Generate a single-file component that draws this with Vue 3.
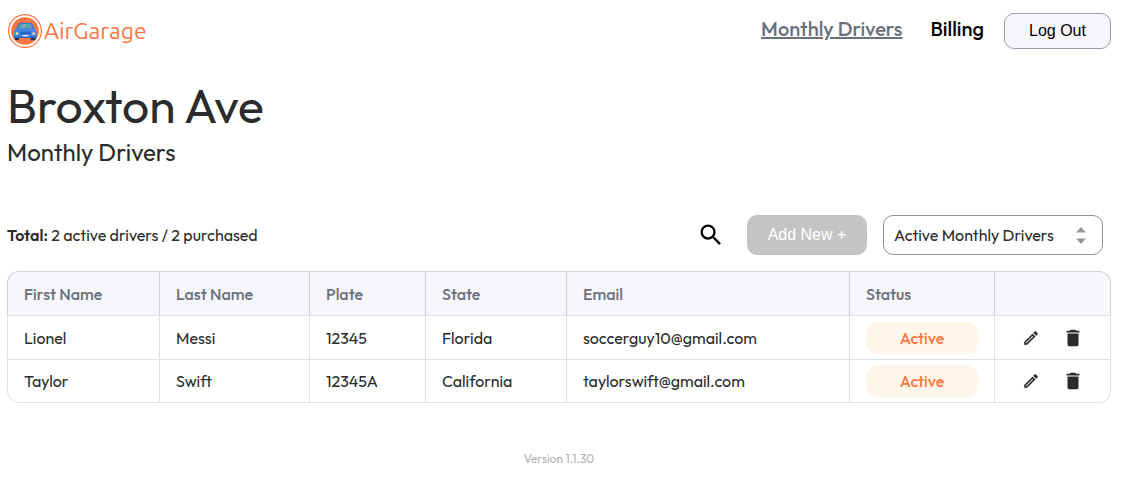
<script setup>
import { ref } from 'vue'

const filter = ref('active')
const columns = [
  { label: 'First Name', width: 153 },
  { label: 'Last Name', width: 150 },
  { label: 'Plate', width: 116 },
  { label: 'State', width: 141 },
  { label: 'Email', width: 283 },
  { label: 'Status', width: 145 },
  { label: '', width: 116 },
]
const total = columns.reduce((sum, c) => sum + c.width, 0)
const drivers = [
  { first: 'Lionel', last: 'Messi', plate: '12345', state: 'Florida', email: 'soccerguy10@gmail.com' },
  { first: 'Taylor', last: 'Swift', plate: '12345A', state: 'California', email: 'taylorswift@gmail.com' },
]
</script>

<template>
  <div class="page">
    <header class="topbar">
      <a class="brand" href="#">
        <svg class="logo" viewBox="0 0 36 36" aria-hidden="true">
          <circle cx="18" cy="18" r="17" fill="#ff7643" />
          <circle cx="18" cy="18" r="14.8" fill="none" stroke="#fff" stroke-width="1.9" />
          <path d="M8 24h4v3.200H9.200Q8 27.200 8 26zM23.500 24h5v2q0 1.200-1.200 1.200h-3.800z" fill="#24364a" />
          <path d="M13.200 9.700h10.600q1.200 0 1.700 1.200l2.300 5.200H9.200l2.300-5.200q.5-1.200 1.700-1.200z" fill="#3578cf" />
          <path d="M13.700 11h9.600q.7 0 1 .8l1.500 4H11.200l1.500-4q.3-.8 1-.8z" fill="#5f9fae" />
          <path d="M17 11h3l-3.500 4.800H13z" fill="#77b3bd" />
          <path d="M9.800 15.500h17q2.800 1.200 2.800 4V25H7v-5.500q0-2.800 2.800-4z" fill="#4287ea" />
          <path d="M12.500 18.500h12l-1.500 3H14zM7 23.300h22.600V25H7z" fill="#2867c3" />
          <circle cx="10" cy="20.500" r="1.300" fill="#ffe1a5" />
          <circle cx="26.600" cy="20.500" r="1.300" fill="#ffe1a5" />
          <path d="M15.500 22h6v1.500h-6z" fill="#e8edf5" />
        </svg>
        <span class="brand-name">AirGarage</span>
      </a>
      <nav class="nav">
        <a class="nav-link current" href="#">Monthly Drivers</a>
        <a class="nav-link" href="#">Billing</a>
        <button class="logout" type="button">Log Out</button>
      </nav>
    </header>

    <main>
      <h1>Broxton Ave</h1>
      <h2>Monthly Drivers</h2>

      <div class="toolbar">
        <p class="total"><strong>Total:</strong> 2 active drivers / 2 purchased</p>
        <div class="actions">
          <button class="icon-button search" type="button" aria-label="Search">
            <svg width="28" height="28" viewBox="0 0 24 24"><path d="M15.500 14h-.79l-.28-.27A6.471 6.471 0 0 0 16 9.500 6.500 6.500 0 1 0 9.500 16c1.610 0 3.090-.59 4.230-1.570l.27.28v.79l5 4.990L20.490 19l-4.990-5zm-6 0C7.010 14 5 11.990 5 9.500S7.010 5 9.500 5 14 7.010 14 9.500 11.990 14 9.500 14z" /></svg>
          </button>
          <button class="add" type="button" disabled>Add New +</button>
          <div class="select-wrap">
            <select v-model="filter" aria-label="Driver filter">
              <option value="active">Active Monthly Drivers</option>
            </select>
            <svg class="arrows" width="10" height="17" viewBox="0 0 10 17" aria-hidden="true"><path d="M0 5.500 5 0l5 5.500zM0 11.500h10L5 17z" fill="#969696" /></svg>
          </div>
        </div>
      </div>

      <table>
        <colgroup>
          <col v-for="(c, i) in columns" :key="i" :style="{ width: (c.width / total) * 100 + '%' }">
        </colgroup>
        <thead>
          <tr><th v-for="(c, i) in columns" :key="i" scope="col">{{ c.label }}</th></tr>
        </thead>
        <tbody>
          <tr v-for="d in drivers" :key="d.email">
            <td>{{ d.first }}</td>
            <td>{{ d.last }}</td>
            <td>{{ d.plate }}</td>
            <td>{{ d.state }}</td>
            <td>{{ d.email }}</td>
            <td><span class="badge">Active</span></td>
            <td>
              <div class="row-actions">
                <button class="icon-button" type="button" :aria-label="`Edit ${d.first}`">
                  <svg width="18" height="18" viewBox="0 0 24 24"><path d="M14.060 9.020l.92.92L5.920 19H5v-.92l9.060-9.060M17.660 3c-.25 0-.51.1-.7.290l-1.830 1.830 3.750 3.750 1.830-1.830a.996.996 0 0 0 0-1.410l-2.340-2.340c-.2-.2-.45-.29-.71-.29zm-3.600 3.190L3 17.250V21h3.750L17.810 9.940l-3.750-3.750z" fill="#2b2b2b" stroke="#2b2b2b" stroke-width=".3" /></svg>
                </button>
                <button class="icon-button" type="button" :aria-label="`Delete ${d.first}`">
                  <svg width="22" height="22" viewBox="0 0 24 24"><path d="M6 19c0 1.100.9 2 2 2h8c1.100 0 2-.9 2-2V7H6v12zM19 4h-3.500l-1-1h-5l-1 1H5v2h14V4z" fill="#2b2b2b" /></svg>
                </button>
              </div>
            </td>
          </tr>
        </tbody>
      </table>
    </main>
    <footer>Version 1.1.30</footer>
  </div>
</template>

<style>
body { margin: 0; background: #fff; }
</style>

<style scoped>
.page {
  padding: 13px 15px 0 7px;
  font-family: Outfit, Lato, sans-serif;
  font-size: 16px;
  line-height: 20px;
  font-weight: 400;
  color: #2b2b2b;
}
button, select { font: inherit; }
.topbar, .nav, .brand, .actions, .toolbar, .row-actions { display: flex; align-items: center; }
.topbar, .toolbar { justify-content: space-between; }
.brand { gap: 1px; color: #ff7643; text-decoration: none; }
.logo { width: 36px; height: 36px; }
.brand-name { font-family: Ubuntu, "Noto Sans", sans-serif; font-size: 23px; line-height: 36px; }
.nav-link { padding-bottom: 4px; color: #000; font-size: 20px; line-height: 24px; font-weight: 500; margin-right: 28px; text-decoration: none; }
.nav-link + .nav-link { margin-right: 20px; }
.nav-link.current { color: #6b6f7b; text-decoration: underline; }
.logout {
  width: 107px;
  height: 36px;
  padding: 0;
  border: 1px solid #9a9dab;
  border-radius: 10px;
  background: #f7f6fc;
  color: #000;
  font-family: "Liberation Sans", Arial, sans-serif;
  font-size: 16px;
}
h1, h2, p { margin: 0; font-weight: 400; }
h1 { margin-top: 26px; font-size: 48px; line-height: 60px; }
h2 { margin-top: 2px; font-size: 24px; line-height: 30px; }
.toolbar { margin: 48px 8px 16px 0; }
strong { font-weight: 600; }
.icon-button { display: flex; padding: 0; border: 0; background: none; }
.search { margin-right: 22px; }
.add {
  width: 120px;
  height: 40px;
  margin-right: 16px;
  padding: 0;
  border: 0;
  border-radius: 10px;
  background: #c4c4c4;
  color: #fff;
  font-family: "Liberation Sans", Arial, sans-serif;
}
.select-wrap { position: relative; width: 220px; }
select {
  display: block;
  width: 100%;
  height: 40px;
  padding: 0 30px 0 10px;
  appearance: none;
  border: 1px solid #929292;
  border-radius: 10px;
  background: #fff;
  color: #2b2b2b;
}
.arrows { position: absolute; right: 17px; top: 12px; pointer-events: none; }
table { width: 100%; table-layout: fixed; border-collapse: separate; border-spacing: 0; }
th, td { box-sizing: border-box; padding: 0 16px; text-align: left; border: 0 solid #e0dfe9; border-right-width: 1px; }
th { height: 44px; background: #f7f6fc; color: #6b6f7b; font-weight: 500; border-color: #cfcfd8; border-top-width: 1px; }
td { height: 44px; border-top-width: 1px; }
th:first-child, td:first-child { border-left-width: 1px; }
tbody tr:last-child td { border-bottom-width: 1px; }
th:first-child { border-top-left-radius: 12px; }
th:last-child { border-top-right-radius: 12px; }
tbody tr:last-child td:first-child { border-bottom-left-radius: 12px; }
tbody tr:last-child td:last-child { border-bottom-right-radius: 12px; }
.badge { display: block; height: 32px; line-height: 32px; border-radius: 12px; background: #fff6e9; color: #ff7643; text-align: center; font-weight: 500; }
.row-actions { justify-content: center; gap: 22px; padding-left: 2px; }
footer { margin-top: 48px; text-align: center; font-size: 12px; line-height: 16px; color: #b0b0b0; }
</style>
